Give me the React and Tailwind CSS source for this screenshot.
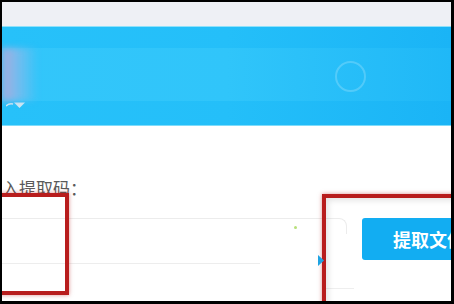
export default function App() {
  return (
    <div className="h-[304px] w-[454px] bg-black pb-[3px] pl-[2px] pr-[3px] pt-[2px]">
      <div className="relative flex h-full w-full flex-col overflow-hidden bg-white font-['Noto_Sans_CJK_SC',sans-serif]">
        {/* top browser strip */}
        <div className="h-[24px] shrink-0 bg-[#eef0f5]" />
        <div className="h-[1px] shrink-0 bg-[#8ee1fa]" />

        {/* blue banner */}
        <div className="relative flex h-[99px] shrink-0 flex-col bg-gradient-to-r from-[#27c1f9] via-[#24bff9] to-[#1ab4f6] pt-[21px]">
          <div className="relative flex h-[53px] items-center bg-gradient-to-r from-[#33c6fa] via-[#30c5fa] to-[#1fb8f7]">
            <div className="h-full w-[36px] bg-gradient-to-r from-[#a9acdf] via-[#92b9ea]/60 to-transparent blur-[3px]" />
            <div className="ml-[297px] mt-[3px] h-[31px] w-[31px] rounded-full border-[2px] border-white/20" />
          </div>
          <svg className="ml-[4px] mt-[0px]" width="22" height="8" viewBox="0 0 22 8">
            <path d="M0 5 Q3 2 7 3" fill="none" stroke="#cfe8f3" strokeWidth="1.5" />
            <path d="M8 1.5 L19 1.5 L13.5 7 Z" fill="#cfe8f3" />
          </svg>
          <div className="absolute bottom-0 left-0 right-0 h-[1px] bg-[#7fdcfa]" />
        </div>

        {/* form area */}
        <div className="flex flex-col pt-[51px]">
          <div className="text-[17px] leading-[22px] text-[#5a5a5a]">入提取码：</div>
          <div className="mt-[19px] flex items-start gap-[15px]">
            <div className="relative -ml-[10px] h-[46px] w-[355px] shrink-0">
              <div className="h-[16px] rounded-tr-[8px] border-r border-t border-[#ececec]" />
              <div className="absolute bottom-0 left-0 h-[1px] w-[268px] bg-[#ededed]" />
              <div className="absolute left-[302px] top-[8px] h-[3px] w-[3px] rounded-full bg-[#b8e07a]" />
            </div>
            <button className="h-[42px] w-[130px] shrink-0 rounded-[3px] bg-[#12adf2] pl-[31px] text-left text-[18px] font-bold whitespace-nowrap text-white">
              提取文件
            </button>
          </div>
          <div className="ml-[322px] mt-[24px] h-[1px] w-[30px] bg-[#eeeeee]" />
        </div>

        {/* annotation boxes */}
        <div className="absolute left-[-12px] top-[191px] h-[102px] w-[79px] border-[4px] border-[#b81d1d] shadow-[0_0_4px_rgba(184,29,29,0.5)]" />
        <div className="absolute left-[320px] top-[192px] h-[140px] w-[160px] border-[4px] border-[#b81d1d] shadow-[0_0_4px_rgba(184,29,29,0.5),inset_2px_2px_6px_rgba(0,0,0,0.12)]" />
        <svg className="absolute left-[316px] top-[253px]" width="6" height="11" viewBox="0 0 6 11">
          <path d="M0 0 L6 5.5 L0 11 Z" fill="#1ea3e2" />
        </svg>
      </div>
    </div>
  );
}
